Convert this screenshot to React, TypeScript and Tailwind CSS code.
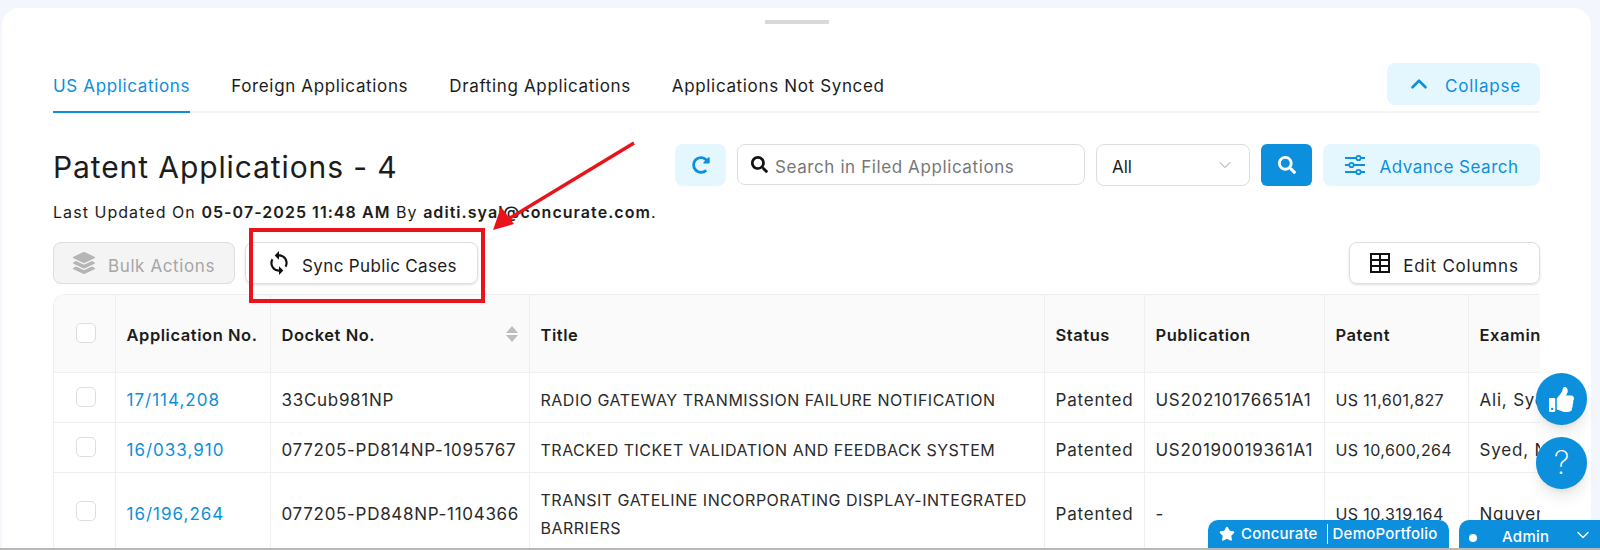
import { ChevronDown, ChevronUp, Star } from "lucide-react";
import { FaLayerGroup, FaRedoAlt, FaSearch, FaThumbsUp } from "react-icons/fa";
import { MdSync } from "react-icons/md";

const rows = [
  { app: "17/114,208", docket: "33Cub981NP", title: "RADIO GATEWAY TRANMISSION FAILURE NOTIFICATION", pub: "US20210176651A1", patent: "US 11,601,827", exam: "Ali, Syed", h: "h-[50px]" },
  { app: "16/033,910", docket: "077205-PD814NP-1095767", title: "TRACKED TICKET VALIDATION AND FEEDBACK SYSTEM", pub: "US20190019361A1", patent: "US 10,600,264", exam: "Syed, Nabil", h: "h-[50px]" },
  { app: "16/196,264", docket: "077205-PD848NP-1104366", title: "TRANSIT GATELINE INCORPORATING DISPLAY-INTEGRATED BARRIERS", pub: "-", patent: "US 10,319,164", exam: "Nguyen", h: "h-[78px]" },
];

const th = "border-r border-b border-[#efefef] pl-[11px] pr-[6px] pt-[5px] text-left font-semibold whitespace-nowrap text-[16.5px] tracking-[0.55px] text-[#1c1c1c]";
const td = "border-r border-b border-[#efefef] pl-[11px] pr-[5px] pt-[5px] leading-[28px] text-[#2a2a2a]";
const boxCell = "border-r border-b border-[#efefef] pl-[3px]";

function Box() {
  return <div className="h-[20px] w-[20px] rounded-[5px] border border-[#dedede] bg-white" />;
}

function Sliders() {
  return (
    <svg width="22" height="22" viewBox="0 0 22 22" fill="none" stroke="currentColor" strokeWidth="1.8">
      <path d="M1 4h11M17 4h4M1 11h4M10 11h11M1 18h11M17 18h4" />
      <circle cx="14.5" cy="4" r="2.2" />
      <circle cx="7.5" cy="11" r="2.2" />
      <circle cx="14.5" cy="18" r="2.2" />
    </svg>
  );
}

function Grid() {
  return (
    <svg width="20" height="20" viewBox="0 0 20 20" fill="none" stroke="#111" strokeWidth="2">
      <rect x="1" y="1" width="18" height="18" />
      <path d="M10 1v18M1 7h18M1 13h18" />
    </svg>
  );
}

export default function App() {
  return (
    <div className="relative h-[550px] w-[1600px] overflow-hidden bg-[#f3f7fd] font-['Inter',sans-serif] text-[#1c1c1c]">
      <div className="ml-[2px] mt-[8px] h-[542px] w-[1589px] rounded-t-[18px] bg-white pl-[51px] pr-[51px]">
        <div className="mx-auto h-[4px] w-[64px] translate-y-[12px] bg-[#d9d9d9]" />

        {/* tabs */}
        <div className="mt-[51px] flex h-[50px] items-start justify-between border-b-2 border-[#f4f4f4]">
          <div className="flex gap-[41px] text-[17px] tracking-[0.65px]">
            <div className="h-[50px] border-b-2 border-[#0c8fdc] pt-[11px] text-[#0c8fdc]">US Applications</div>
            <div className="pt-[11px]">Foreign Applications</div>
            <div className="pt-[11px]">Drafting Applications</div>
            <div className="pt-[11px]">Applications Not Synced</div>
          </div>
          <button className="flex h-[42px] w-[153px] items-center justify-center gap-[13px] rounded-[8px] bg-[#e5f7fe] text-[17px] tracking-[0.8px] text-[#0c8fdc]">
            <ChevronUp size={26} strokeWidth={2.4} />
            <span className="pt-[5px]">Collapse</span>
          </button>
        </div>

        {/* heading + search */}
        <div className="mt-[31px] flex items-start justify-between">
          <div>
            <h1 className="mt-[4px] text-[30px] leading-[38px] tracking-[0.9px]">Patent Applications - 4</h1>
            <p className="mt-[16px] text-[16px] leading-[20px] tracking-[1.05px]">
              Last Updated On <b className="font-semibold">05-07-2025 11:48 AM</b> By <b className="font-semibold">aditi.syal@concurate.com</b>.
            </p>
          </div>
          <div className="flex gap-[11px]">
            <button className="flex h-[42px] w-[51px] items-center justify-center rounded-[8px] bg-[#e5f7fe] text-[#0c8fdc]">
              <FaRedoAlt size={18} />
            </button>
            <div className="flex h-[41px] w-[348px] items-center gap-[7px] rounded-[8px] border border-[#dedede] px-[13px] text-[17px] tracking-[0.6px] text-[#777]">
              <FaSearch size={17} className="text-[#111]" />
              <span className="pt-[6px]">Search in Filed Applications</span>
            </div>
            <div className="flex h-[42px] w-[154px] items-center justify-between rounded-[8px] border border-[#dedede] pl-[15px] pr-[14px] text-[17px]">
              <span className="pt-[6px]">All</span>
              <ChevronDown size={20} strokeWidth={1} className="text-[#888]" />
            </div>
            <button className="flex h-[42px] w-[51px] items-center justify-center rounded-[6px] bg-[#0c8fdc] text-white">
              <FaSearch size={18} />
            </button>
            <button className="flex h-[42px] w-[217px] items-center justify-center gap-[13px] rounded-[8px] bg-[#e5f7fe] text-[17px] tracking-[0.5px] text-[#0c8fdc]">
              <Sliders />
              <span className="pt-[6px]">Advance Search</span>
            </button>
          </div>
        </div>

        {/* actions */}
        <div className="mt-[20px] flex items-center justify-between">
          <div className="flex gap-[10px]">
            <button className="flex h-[42px] w-[182px] items-center justify-center gap-[13px] rounded-[8px] border border-[#dedede] bg-[#f4f4f4] text-[17px] tracking-[0.6px] text-[#a6a6a6]">
              <FaLayerGroup size={22} className="text-[#b5b5b5]" />
              <span className="pt-[7px]">Bulk Actions</span>
            </button>
            <button className="flex h-[42px] w-[233px] items-center justify-center gap-[10px] rounded-[8px] border border-[#dedede] text-[17px] tracking-[0.35px] shadow-sm">
              <MdSync size={26} className="text-[#111]" />
              <span className="pt-[7px]">Sync Public Cases</span>
            </button>
          </div>
          <button className="flex h-[42px] w-[191px] items-center justify-center gap-[13px] rounded-[8px] border border-[#dedede] text-[17px] tracking-[0.8px] shadow-sm">
            <Grid />
            <span className="pt-[7px]">Edit Columns</span>
          </button>
        </div>

        {/* table */}
        <div className="mt-[10px] h-[256px] w-[1487px] overflow-hidden rounded-tl-[12px] border-l border-t border-[#efefef]">
          <table className="w-[1560px] table-fixed border-collapse text-[17px] tracking-[0.8px]">
            <colgroup>
              <col className="w-[61px]" /><col className="w-[155px]" /><col className="w-[259px]" /><col className="w-[515px]" />
              <col className="w-[100px]" /><col className="w-[180px]" /><col className="w-[144px]" /><col className="w-[146px]" />
            </colgroup>
            <thead>
              <tr className="h-[77px] bg-[#fafafa]">
                <th className={boxCell}><div className="flex justify-center"><Box /></div></th>
                <th className={th}>Application No.</th>
                <th className={th}>
                  <div className="flex items-center justify-between">Docket No.
                    <span className="-mt-[4px] flex flex-col gap-[2px] pr-[5px]">
                      <span className="h-0 w-0 border-x-[6px] border-b-[7px] border-x-transparent border-b-[#bdbdbd]" />
                      <span className="h-0 w-0 border-x-[6px] border-t-[7px] border-x-transparent border-t-[#bdbdbd]" />
                    </span>
                  </div>
                </th>
                <th className={th}>Title</th>
                <th className={th}>Status</th>
                <th className={th}>Publication</th>
                <th className={th}>Patent</th>
                <th className={th}>Examiner</th>
              </tr>
            </thead>
            <tbody>
              {rows.map((r) => (
                <tr key={r.app} className={r.h}>
                  <td className={boxCell}><div className="flex justify-center"><Box /></div></td>
                  <td className={`${td} tracking-[1px] !text-[#0c8fdc]`}>{r.app}</td>
                  <td className={`${td} whitespace-nowrap tracking-[0.7px]`}>{r.docket}</td>
                  <td className={`${td} text-[16px] !tracking-[0.5px]`}>{r.title}</td>
                  <td className={td}>Patented</td>
                  <td className={`${td} !tracking-[0.7px]`}>{r.pub}</td>
                  <td className={`${td} !text-[16px] !tracking-[0.4px]`}>{r.patent}</td>
                  <td className={`${td} whitespace-nowrap`}>{r.exam}</td>
                </tr>
              ))}
            </tbody>
          </table>
        </div>
      </div>

      {/* annotation drawn on top of the screenshot */}
      <div className="absolute left-[249px] top-[228px] h-[75px] w-[236px] border-[4px] border-[#e8141a]" />
      <svg className="absolute left-0 top-0" width="1600" height="550" fill="none">
        <path d="M634 143 L505 221" stroke="#e8141a" strokeWidth="3.5" />
        <path d="M493 230 L501 207 L514 224 Z" fill="#e8141a" />
      </svg>

      {/* floating buttons */}
      <div className="absolute left-[1536px] top-[373px] flex h-[52px] w-[51px] items-center justify-center rounded-full bg-[#0c8fdc] text-white shadow-lg">
        <FaThumbsUp size={25} />
      </div>
      <div className="absolute left-[1536px] top-[437px] flex h-[52px] w-[51px] items-center justify-center rounded-full bg-[#0c8fdc] text-[32px] font-extralight text-white shadow-lg">
        ?
      </div>

      {/* footer tags */}
      <div className="absolute left-[1208px] top-[520px] flex h-[28px] w-[241px] items-center rounded-t-[10px] bg-[#0c8fdc] pl-[11px] text-[15px] font-medium tracking-[0.2px] text-white">
        <Star size={16} fill="white" />
        <span className="ml-[6px]">Concurate</span>
        <span className="ml-[9px] mr-[5px] h-[20px] w-px bg-white" />
        DemoPortfolio
      </div>
      <div className="absolute left-[1459px] top-[520px] flex h-[28px] w-[141px] items-center rounded-tl-[10px] bg-[#0c8fdc] pl-[10px] pt-[7px] text-[15px] font-medium tracking-[0.3px] text-white">
        <span className="h-[8px] w-[8px] rounded-full bg-white" />
        <span className="ml-[25px]">Admin</span>
        <ChevronDown size={20} strokeWidth={1.6} className="-mt-[6px] ml-[24px]" />
      </div>
      <div className="absolute bottom-0 left-0 h-[2px] w-full bg-[#b8b8b8]" />
    </div>
  );
}
